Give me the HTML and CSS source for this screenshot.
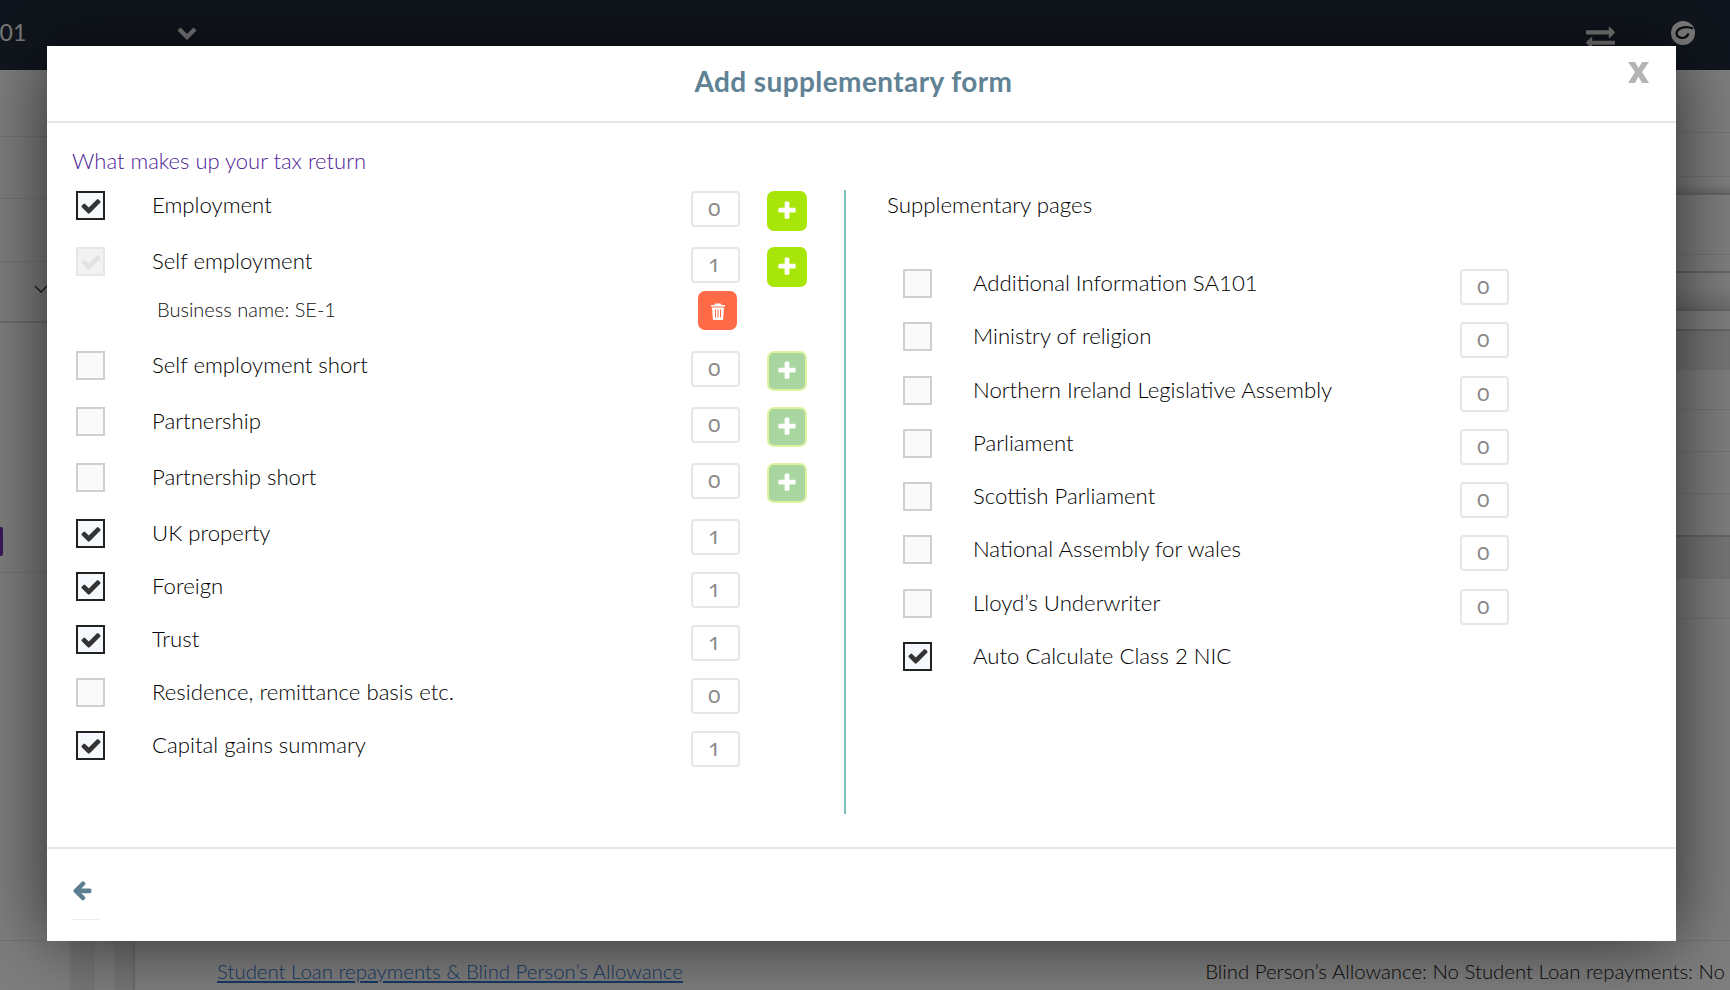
FILE: index.html
```html
<!DOCTYPE html>
<html lang="en">
<head>
<meta charset="utf-8">
<title>Add supplementary form</title>
<link rel="stylesheet" href="styles.css">
</head>
<body>
<svg class="sprite" aria-hidden="true">
  <symbol id="i-check" viewBox="0 0 1792 1792"><path d="M1671 566q0 40-28 68l-724 724-136 136q-28 28-68 28t-68-28l-136-136-362-362q-28-28-28-68t28-68l136-136q28-28 68-28t68 28l294 295 656-657q28-28 68-28t68 28l136 136q28 28 28 68z"/></symbol>
  <symbol id="i-plus" viewBox="0 0 1792 1792"><path d="M1600 736v192q0 40-28 68t-68 28h-416v416q0 40-28 68t-68 28h-192q-40 0-68-28t-28-68v-416h-416q-40 0-68-28t-28-68v-192q0-40 28-68t68-28h416v-416q0-40 28-68t68-28h192q40 0 68 28t28 68v416h416q40 0 68 28t28 68z"/></symbol>
</svg>

<div class="page">
  <header class="topbar">
    <span class="client">T01</span>
    <svg class="top-chevron" viewBox="0 0 22 14"><path d="M3 3l8 8 8-8" fill="none" stroke="currentColor" stroke-width="4.4"/></svg>
    <span class="top-spacer"></span>
    <svg class="top-exchange" viewBox="0 0 1792 1792"><path d="M1792 1184v192q0 13-9.500 22.500t-22.500 9.500h-1376v192q0 13-9.500 22.500t-22.500 9.500q-12 0-24-10l-319-320q-9-9-9-22 0-14 9-23l320-320q9-9 23-9 13 0 22.500 9.500t9.500 22.500v192h1376q13 0 22.500 9.500t9.500 22.500zm0-544q0 14-9 23l-320 320q-9 9-23 9-13 0-22.500-9.500t-9.500-22.500v-192h-1376q-13 0-22.500-9.500t-9.500-22.500v-192q0-13 9.500-22.500t22.500-9.500h1376v-192q0-14 9-23t23-9q12 0 24 10l319 319q9 9 9 23z"/></svg>
    <svg class="top-logo" viewBox="0 0 24 24"><circle cx="12" cy="12" r="12"/><path d="M22 7.500C15 4.500 6.500 6.500 5.500 12c-.3 3 3 5.200 6 5 3-.2 5-2 6-4.500" fill="none" stroke="#12171f" stroke-width="2.200"/></svg>
  </header>

  <div class="backdrop-rows">
    <div class="side side-left">
      <div class="band b-67"></div><div class="band b-62"></div><div class="band b-63"></div>
      <div class="band b-61 chevron-row"><svg class="side-chevron" viewBox="0 0 14 8"><path d="M1 1l6 6 6-6" fill="none" stroke="#333" stroke-width="1.300"/></svg></div>
      <div class="band b-250"><span class="purple-tab"></span></div>
      <div class="band b-368"></div>
    </div>
    <div class="side side-right">
      <div class="band b-63"></div><div class="band b-44"></div><div class="band b-18 strong shade"></div>
      <div class="band b-60"></div><div class="band b-18 strong"></div><div class="band b-38 strong shade"></div>
      <div class="band b-20 strong"></div><div class="band b-39 dim"></div><div class="band b-40"></div>
      <div class="band b-42"></div><div class="band b-42"></div><div class="band b-43 strong"></div>
      <div class="band b-42 dim"></div><div class="band b-40"></div><div class="band b-322"></div>
    </div>
  </div>

  <div class="under-row">
    <span class="under-bar under-bar-a"></span>
    <span class="under-bar under-bar-b"></span>
    <a class="under-link" href="#">Student Loan repayments &amp; Blind Person’s Allowance</a>
    <span class="under-summary">Blind Person’s Allowance: No Student Loan repayments: No</span>
  </div>
</div>

<div class="overlay"></div>

<section class="modal">
  <header class="modal-head">
    <h1 class="modal-title">Add supplementary form</h1>
    <button class="close" aria-label="Close"><svg viewBox="0 0 21 21"><path d="M0 0h7l3.500 6L14 0h7l-7 10 7 11h-7l-3.500-6.500L7 21H0l7-11z"/></svg></button>
  </header>

  <div class="modal-body">
    <h2 class="section-title">What makes up your tax return</h2>
    <div class="columns">
      <div class="col-left">
        <div class="row row-56"><span class="cb on"><svg><use href="#i-check"/></svg></span><span class="lbl">Employment</span><span class="count">0</span><button class="add"><svg><use href="#i-plus"/></svg></button></div>
        <div class="row row-44"><span class="cb locked"><svg><use href="#i-check"/></svg></span><span class="lbl">Self employment</span><span class="count">1</span><button class="add"><svg><use href="#i-plus"/></svg></button></div>
        <div class="sub-row"><span class="biz">Business name: SE-1</span><button class="trash" aria-label="Delete"><svg viewBox="0 0 16 18"><path d="M5.500 1.500h5l1 1.500H15v1.500H1V3h3.500zM2 5.500h12l-.8 11.500a1 1 0 0 1-1 1H3.800a1 1 0 0 1-1-1z"/><path d="M5.500 7.500v8M8 7.500v8M10.500 7.500v8" stroke="#ff6b47" stroke-width="1" fill="none"/></svg></button></div>
        <div class="row row-56"><span class="cb"></span><span class="lbl">Self employment short</span><span class="count">0</span><button class="add faded"><svg><use href="#i-plus"/></svg></button></div>
        <div class="row row-56"><span class="cb"></span><span class="lbl">Partnership</span><span class="count">0</span><button class="add faded"><svg><use href="#i-plus"/></svg></button></div>
        <div class="row row-56"><span class="cb"></span><span class="lbl">Partnership short</span><span class="count">0</span><button class="add faded"><svg><use href="#i-plus"/></svg></button></div>
        <div class="row row-53"><span class="cb on"><svg><use href="#i-check"/></svg></span><span class="lbl">UK property</span><span class="count">1</span><span class="add-slot"></span></div>
        <div class="row row-53"><span class="cb on"><svg><use href="#i-check"/></svg></span><span class="lbl">Foreign</span><span class="count">1</span><span class="add-slot"></span></div>
        <div class="row row-53"><span class="cb on"><svg><use href="#i-check"/></svg></span><span class="lbl">Trust</span><span class="count">1</span><span class="add-slot"></span></div>
        <div class="row row-53"><span class="cb"></span><span class="lbl">Residence, remittance basis etc.</span><span class="count">0</span><span class="add-slot"></span></div>
        <div class="row row-53"><span class="cb on"><svg><use href="#i-check"/></svg></span><span class="lbl">Capital gains summary</span><span class="count">1</span><span class="add-slot"></span></div>
      </div>
      <div class="col-right">
        <h3 class="pages-title">Supplementary pages</h3>
        <div class="pages">
          <div class="row page-row"><span class="cb"></span><span class="lbl lbl-r">Additional Information SA101</span><span class="count">0</span></div>
          <div class="row page-row"><span class="cb"></span><span class="lbl lbl-r">Ministry of religion</span><span class="count">0</span></div>
          <div class="row page-row"><span class="cb"></span><span class="lbl lbl-r">Northern Ireland Legislative Assembly</span><span class="count">0</span></div>
          <div class="row page-row"><span class="cb"></span><span class="lbl lbl-r">Parliament</span><span class="count">0</span></div>
          <div class="row page-row"><span class="cb"></span><span class="lbl lbl-r">Scottish Parliament</span><span class="count">0</span></div>
          <div class="row page-row"><span class="cb"></span><span class="lbl lbl-r">National Assembly for wales</span><span class="count">0</span></div>
          <div class="row page-row"><span class="cb"></span><span class="lbl lbl-r">Lloyd’s Underwriter</span><span class="count">0</span></div>
          <div class="row page-row"><span class="cb on"><svg><use href="#i-check"/></svg></span><span class="lbl lbl-r">Auto Calculate Class 2 NIC</span></div>
        </div>
      </div>
    </div>
  </div>

  <footer class="modal-foot">
    <button class="back" aria-label="Back"><svg viewBox="0 0 1792 1792"><path d="M1664 896v128q0 53-32.500 90.500t-84.500 37.500h-704l293 294q38 36 38 90t-38 90l-75 76q-37 37-90 37-52 0-91-37l-651-652q-37-37-37-90 0-52 37-91l651-650q38-38 91-38 52 0 90 38l75 74q38 38 38 91t-38 91l-293 293h704q52 0 84.500 37.500t32.500 90.500z"/></svg></button>
    <span class="back-rule"></span>
  </footer>
</section>
</body>
</html>
```

FILE: styles.css
```css
* { box-sizing: border-box; }
html, body { margin: 0; height: 100%; overflow: hidden; }
body { font-family: Lato, "Liberation Sans", sans-serif; background: #fff; color: #222; position: relative; width: 1730px; height: 990px; }
.sprite { display: none; }
button { padding: 0; border: 0; background: none; font: inherit; }

/* page behind the dialog */
.page { width: 1730px; height: 990px; display: flex; flex-direction: column; overflow: hidden; }
.topbar { height: 70px; flex: none; background: #222c3c; display: flex; align-items: flex-start; color: #fff; }
.client { margin: 19px 0 0 -14px; font-size: 23px; line-height: 26px; color: #fff; width: 190px; flex: none; opacity: .95; }
.top-chevron { width: 22px; height: 14px; margin-top: 26px; color: #fff; }
.top-spacer { flex: 1; }
.top-exchange { width: 29px; height: 29px; margin: 22px 56px 0 0; fill: #fff; }
.top-logo { width: 24px; height: 24px; margin: 21px 35px 0 0; fill: #fff; }

.backdrop-rows { height: 870px; flex: none; display: flex; justify-content: space-between; }
.side { width: 60px; display: flex; flex-direction: column; }
.band { flex: none; border-bottom: 1px solid #eaeaea; position: relative; }
.band.strong { border-bottom: 2px solid #ccc; }
.band.shade { background: linear-gradient(#fff 40%, #d8d8d8); }
.band.dim { background: #ececec; }
.b-18 { height: 18px; } .b-20 { height: 20px; } .b-38 { height: 38px; } .b-39 { height: 39px; }
.b-40 { height: 40px; } .b-42 { height: 42px; } .b-43 { height: 43px; } .b-44 { height: 44px; }
.b-60 { height: 60px; } .b-61 { height: 61px; border-bottom: 2px solid #ddd; } .b-62 { height: 62px; } .b-63 { height: 63px; }
.b-67 { height: 67px; } .b-250 { height: 250px; } .b-322 { height: 322px; } .b-368 { height: 368px; }
.side-chevron { position: absolute; left: 34px; top: 23px; width: 14px; height: 8px; }
.purple-tab { position: absolute; left: 0; top: 204px; width: 3px; height: 29px; background: #7a2fb5; border-radius: 0 2px 2px 0; }

.under-row { flex: 1; display: flex; align-items: flex-start; position: relative; font-size: 20.400px; font-weight: 300; }
.under-bar { display: block; height: 60px; background: #efefef; flex: none; margin-top: -10px; }
.under-bar-a { width: 25px; margin-left: 70px; }
.under-bar-b { width: 21px; margin-left: 19px; border-right: 2px solid #ddd; }
.under-link { margin: 19px 0 0 82px; color: #2f74cc; white-space: nowrap; }
.under-summary { margin: 19px 5px 0 auto; white-space: nowrap; color: #111; }

.overlay { position: absolute; inset: 0; background: rgba(0, 0, 0, .5); }

/* dialog */
.modal { position: absolute; left: 47px; top: 46px; width: 1629px; height: 895px; background: #fff; box-shadow: 0 0 70px rgba(0, 0, 0, .65); display: flex; flex-direction: column; }
.modal-head { height: 77px; flex: none; border-bottom: 2px solid #e6e6e6; display: flex; align-items: center; justify-content: center; position: relative; padding-right: 16px; }
.modal-title { margin: 0 0 5px; font-size: 28px; font-weight: 700; letter-spacing: .4px; color: #5f8295; }
.close { position: absolute; right: 27px; top: 16px; width: 21px; height: 21px; }
.close svg { display: block; width: 21px; height: 21px; fill: #b4b4b4; }

.modal-body { flex: 1; padding: 25px 0 0 25px; min-height: 0; }
.section-title { margin: 0; height: 42px; font-size: 22px; line-height: 26px; font-weight: 300; color: #4f2396; }
.columns { display: flex; align-items: flex-start; }
.col-left { width: 774px; height: 624px; padding: 1px 37px 0 4px; border-right: 2px solid #7cc0bd; }
.col-right { padding: 0 0 0 41px; }
.pages-title { margin: 0; height: 79px; font-size: 22.300px; font-weight: 300; line-height: 30px; color: #000; }
.pages { margin-left: 16px; width: 606px; }

.row { display: flex; align-items: flex-start; }
.row-56 { height: 56px; }
.row-53 { height: 53px; }
.row-44 { height: 44px; }
.page-row { height: 53.250px; }
.cb { width: 29px; height: 29px; flex: none; border: 2px solid #cfcfcf; background: #fafafa; display: flex; align-items: center; justify-content: center; }
.cb svg { width: 22px; height: 22px; fill: #333; }
.cb.on { border-color: #222; background: #f5f8fd; }
.cb.locked { border-color: #e6e6e6; background: #f2f2f2; }
.cb.locked svg { fill: #e2e2e2; }
.lbl { flex: 1; margin-left: 47px; font-size: 22.200px; line-height: 28px; font-weight: 300; color: #000; }
.lbl-r { margin-left: 41px; }
.count { width: 49px; height: 36px; flex: none; border: 2px solid #e6e6e6; border-radius: 4px; background: #fff; color: #888; font-family: "Open Sans", Lato, sans-serif; font-feature-settings: "onum"; font-size: 23px; line-height: 29px; padding-left: 15px; }
.add, .add-slot { width: 40px; height: 40px; flex: none; margin-left: 27px; }
.add { background: #a8e60a; border-radius: 7px; display: flex; align-items: center; justify-content: center; }
.add svg { width: 22px; height: 22px; fill: #fff; }
.add.faded { background: #a9d5a0; border: 2px solid #dcf3a0; }
.sub-row { height: 60px; display: flex; align-items: flex-start; }
.biz { flex: 1; margin: 5px 0 0 81px; font-size: 20px; line-height: 26px; color: #111; font-weight: 300; }
.trash { width: 39px; height: 39px; flex: none; margin-right: 70px; background: #ff6b47; border-radius: 7px; display: flex; align-items: center; justify-content: center; }
.trash svg { width: 16px; height: 18px; fill: #fff; }

.modal-foot { height: 94px; flex: none; border-top: 2px solid #e6e6e6; padding: 30px 0 0 24px; }
.back { display: block; width: 22px; height: 22px; }
.back svg { display: block; width: 22px; height: 22px; fill: #5b7e91; }
.back-rule { display: block; width: 27px; height: 1px; margin: 18px 0 0 1px; background: #eee; }
```
